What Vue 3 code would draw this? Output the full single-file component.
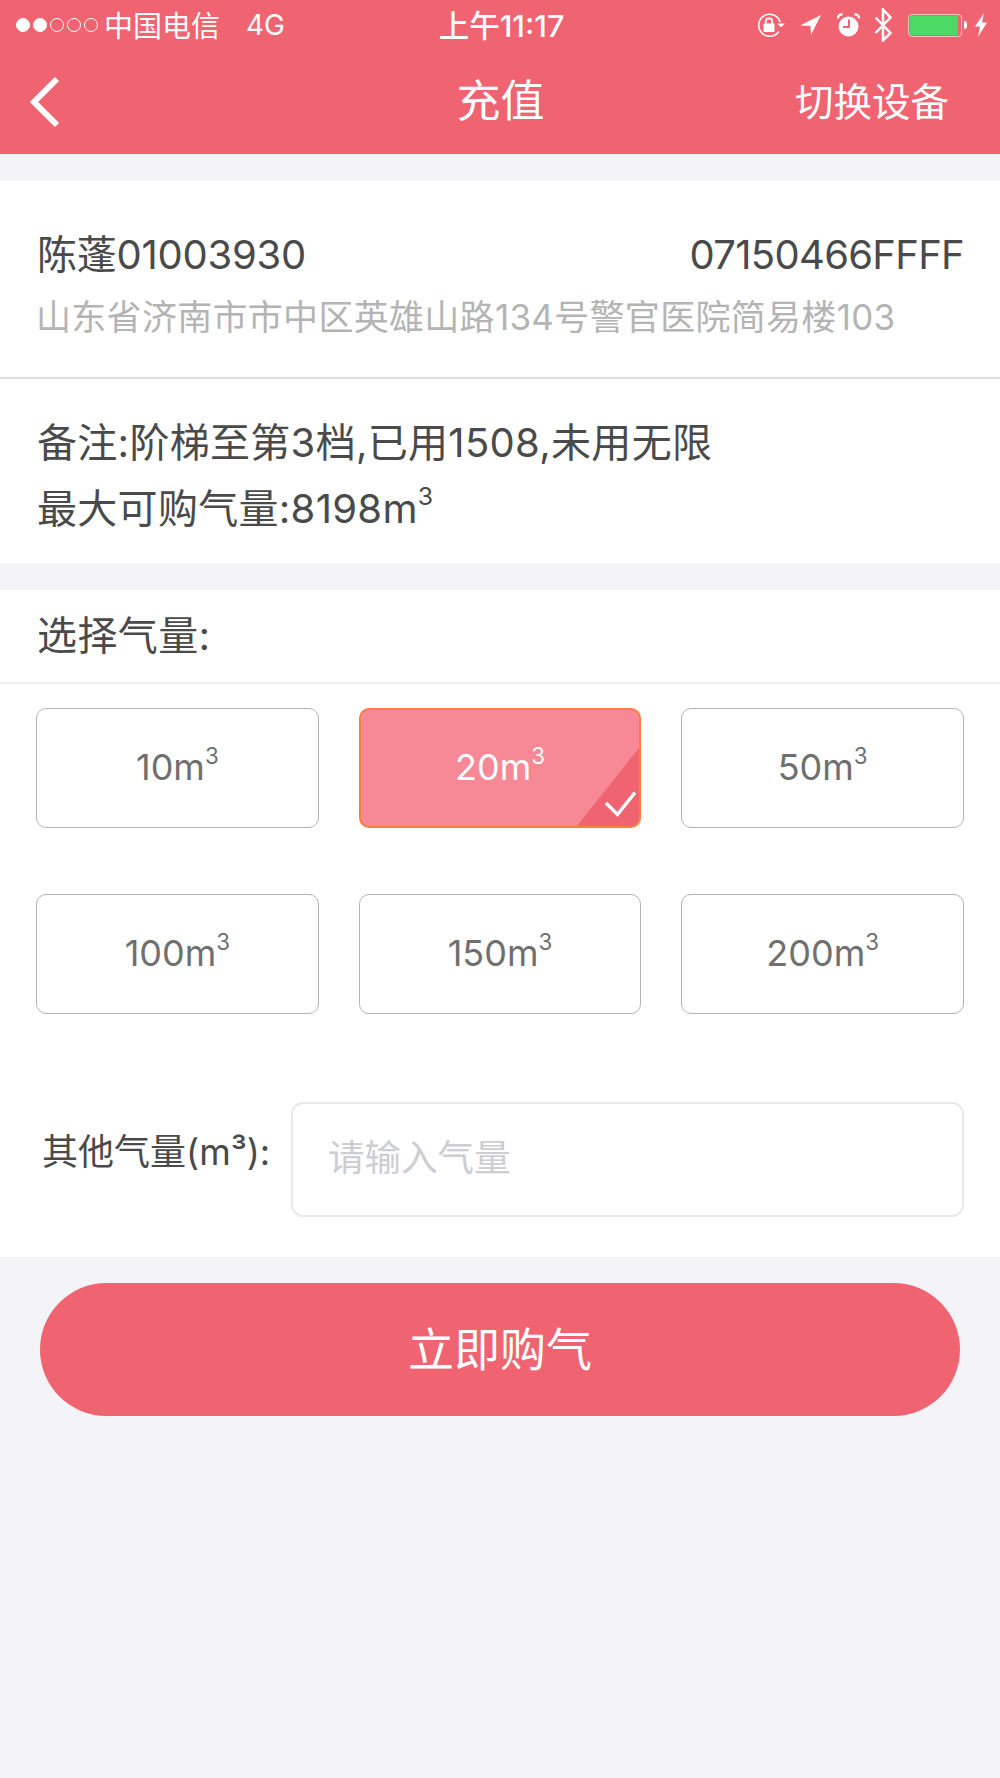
<script setup>
const options = [
  { v: '10', on: false }, { v: '20', on: true }, { v: '50', on: false },
  { v: '100', on: false }, { v: '150', on: false }, { v: '200', on: false },
]
</script>

<template>
  <div class="page">
    <header class="top">
      <div class="status">
        <div class="status-left">
          <span class="dots">
            <i class="dot full"></i><i class="dot full"></i><i class="dot"></i><i class="dot"></i><i class="dot"></i>
          </span>
          <span class="carrier">中国电信</span>
          <span class="net">4G</span>
        </div>
        <div class="clock">上午11:17</div>
        <div class="status-right">
          <svg class="i-lock" width="28" height="24" viewBox="0 0 28 24">
            <path d="M21.8 18.500A11 11 0 1 1 23.200 9" fill="none" stroke="#fff" stroke-width="1.6"/>
            <path d="M20 10.500h8l-4 3.800z" fill="#fff"/>
            <rect x="6.500" y="10.500" width="11" height="8.500" rx="1" fill="#fff"/>
            <path d="M8.800 11V8.500a3.200 3.200 0 0 1 6.400 0V11" fill="none" stroke="#fff" stroke-width="1.800"/>
          </svg>
          <svg class="i-loc" width="21" height="20" viewBox="0 0 21 20"><path d="M21 0L0 10.500 10.500 11 11 20z" fill="#fff"/></svg>
          <svg class="i-alarm" width="23" height="24" viewBox="0 0 23 24">
            <circle cx="11.500" cy="13.500" r="10" fill="#fff"/>
            <path d="M0.800 5.500A4.500 4.500 0 0 1 5.500 1.200M22.200 5.500A4.500 4.500 0 0 0 17.500 1.200" fill="none" stroke="#fff" stroke-width="2.400"/>
            <path d="M12 6.500v7.500H6" fill="none" stroke="#f06371" stroke-width="2"/>
          </svg>
          <svg class="i-bt" width="19" height="34" viewBox="0 0 19 34"><path d="M1.500 9.500l15 15.500-7.500 7.500V1.500l7.500 8-15 15.500" fill="none" stroke="#fff" stroke-width="2.500"/></svg>
          <div class="battery"><div class="battery-fill"></div></div>
          <i class="battery-tip"></i>
          <svg class="i-bolt" width="12" height="24" viewBox="0 0 12 24"><path d="M9 0L0 13.500h5L3 24 12 9.500H7z" fill="#fff"/></svg>
        </div>
      </div>
      <nav class="nav">
        <svg class="back" width="32" height="52" viewBox="0 0 32 52"><path d="M29 3L6 26l23 23" fill="none" stroke="#fff" stroke-width="6"/></svg>
        <div class="title">充值</div>
        <div class="switch">切换设备</div>
      </nav>
    </header>

    <section class="card info">
      <div class="device">
        <div class="row-between">
          <span class="name">陈蓬01003930</span>
          <span class="code">07150466FFFF</span>
        </div>
        <div class="address">山东省济南市市中区英雄山路134号警官医院简易楼103</div>
      </div>
      <div class="note">
        <div>备注:阶梯至第3档,已用1508,未用无限</div>
        <div>最大可购气量:8198m<sup>3</sup></div>
      </div>
    </section>

    <section class="card select">
      <div class="select-head">选择气量:</div>
      <div class="grid">
        <div v-for="o in options" :key="o.v" class="opt" :class="{ on: o.on }">
          <span>{{ o.v }}m<sup>3</sup></span>
          <svg v-if="o.on" class="corner" width="62" height="78" viewBox="0 0 62 78">
            <path d="M62 0V70a8 8 0 0 1-8 8H0z" fill="#f06371"/>
            <path d="M29 55l11.500 11.500L58 44.500" fill="none" stroke="#fff" stroke-width="3.500"/>
          </svg>
        </div>
      </div>
      <div class="other">
        <label class="other-label">其他气量(m³):</label>
        <input class="other-input" placeholder="请输入气量" />
      </div>
    </section>

    <button class="buy">立即购气</button>
  </div>
</template>

<style>
html, body { margin: 0; background: #f3f3f8; }
</style>

<style scoped>
.page {
  width: 1000px;
  height: 1778px;
  background: #f3f3f8;
  font-family: Inter, "Noto Sans CJK SC", sans-serif;
  color: #4a4a4a;
  overflow: hidden;
}
.top { background: #f06371; height: 154px; color: #fff; }
.status {
  height: 50px;
  display: grid;
  grid-template-columns: minmax(0, 1fr) auto minmax(0, 1fr);
  align-items: center;
  padding: 0 13px 0 16px;
  font-size: 28px;
}
.status-left { display: flex; align-items: center; }
.dots { display: flex; gap: 3px; margin-right: 6px; }
.dot { width: 12px; height: 12px; border: 1px solid #fff; border-radius: 50%; }
.dot.full { background: #fff; }
.carrier { font-size: 29px; padding-bottom: 2px; }
.net { margin-left: 26px; }
.clock { font-size: 30.500px; font-weight: 500; padding-bottom: 3px; }
.status-right { display: flex; align-items: center; justify-content: flex-end; }
.i-loc { margin-left: 15px; }
.i-alarm { margin-left: 16px; }
.i-bt { margin-left: 14px; }
.battery {
  margin-left: 15px;
  width: 54px;
  height: 23px;
  padding: 1px;
  border: 1.500px solid #fbc4ca;
  border-radius: 4px;
  box-sizing: border-box;
}
.battery-fill { height: 100%; width: 48px; background: #4cd964; border-radius: 1px; }
.battery-tip { width: 3px; height: 8px; margin-left: 2px; background: #fff; border-radius: 0 3px 3px 0; }
.i-bolt { margin-left: 8px; }
.nav {
  height: 104px;
  display: grid;
  grid-template-columns: minmax(0, 1fr) auto minmax(0, 1fr);
  align-items: center;
  padding: 0 51px 0 52px;
}
.back { display: block; margin-left: -24px; }
.title { font-size: 44px; padding-bottom: 8px; }
.switch { font-size: 38.500px; text-align: right; white-space: nowrap; padding-bottom: 6px; }

.card { background: #fff; margin-top: 27px; }
.info { height: 382px; }
.device {
  height: 198px;
  box-sizing: border-box;
  border-bottom: 2px solid #dcdcdc;
  padding: 48px 36px 0 37px;
}
.row-between {
  display: flex;
  justify-content: space-between;
  font-size: 40px;
  line-height: 52px;
}
.name { letter-spacing: -0.25px; }
.code { letter-spacing: -0.7px; }
.address { font-size: 35px; letter-spacing: 0.3px; line-height: 56px; margin-top: 8px; margin-left: -1px; color: #b4b4b4; white-space: nowrap; }
.note { padding: 31px 37px 0; font-size: 40px; letter-spacing: 0.3px; line-height: 66px; }
sup { font-size: 0.62em; line-height: 0; vertical-align: baseline; position: relative; top: -0.72em; }

.select { height: 667px; display: flex; flex-direction: column; }
.select-head {
  height: 94px;
  box-sizing: border-box;
  border-bottom: 2px solid #efefef;
  padding: 0 37px;
  font-size: 40px;
  letter-spacing: 0.4px;
  line-height: 92px;
}
.grid {
  display: grid;
  grid-template-columns: repeat(3, 1fr);
  gap: 66px 40px;
  padding: 24px 36px 0;
}
.opt {
  position: relative;
  height: 120px;
  box-sizing: border-box;
  border: 1px solid #b4b4b4;
  border-radius: 10px;
  display: flex;
  align-items: center;
  justify-content: center;
  font-size: 36px;
  color: #6f6f6f;
  padding-bottom: 2px;
}
.opt.on {
  background: #f78895;
  border: 2px solid #fb7f3f;
  color: #fff;
  overflow: hidden;
}
.corner { position: absolute; right: 0; bottom: 0; display: block; }
.other {
  display: flex;
  align-items: center;
  margin-top: 88px;
  padding: 0 36px 0 43px;
}
.other-label { font-size: 36px; white-space: nowrap; width: 248px; flex: none; padding-bottom: 22px; margin-left: -1px; margin-right: 1px; }
.other-input {
  flex: 1;
  min-width: 0;
  height: 115px;
  box-sizing: border-box;
  border: 2px solid #e9e9ec;
  border-radius: 12px;
  padding: 0 35px 4px;
  font: inherit;
  font-size: 36.500px;
  background: #fff;
  outline: none;
}
.other-input::placeholder { color: #cdcdd2; opacity: 1; }
.buy {
  display: block;
  width: 920px;
  height: 133px;
  margin: 26px 0 0 40px;
  border: 0;
  border-radius: 67px;
  background: #f06371;
  color: #fff;
  font: inherit;
  font-size: 46px;
  padding-bottom: 8px;
}
</style>
